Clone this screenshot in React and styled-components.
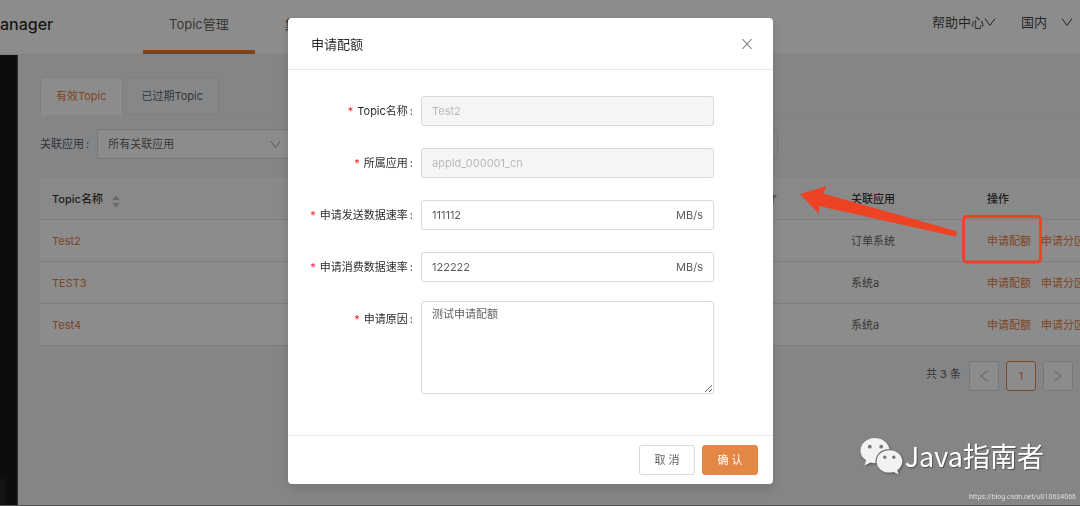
import React from 'react';
import styled, {createGlobalStyle} from 'styled-components';

const GlobalStyle = createGlobalStyle`
  * {
    box-sizing: border-box;
  }

  body {
    margin: 0;
    overflow: hidden;
    background: #f0f2f5;
    color: rgba(0, 0, 0, 0.65);
    font-family: Inter, "Noto Sans CJK SC", sans-serif;
    font-size: 11px;
    line-height: 18px;
  }

  button, input, select, textarea {
    margin: 0;
    color: inherit;
    font: inherit;
  }
`;

const menus = ['Topic管理', '集群管理', '监控大盘', '用户管理', '运维管控'];

const topics = [
    {name: 'Test2', app: '订单系统'},
    {name: 'TEST3', app: '系统a'},
    {name: 'Test4', app: '系统a'},
];

const fields = [
    {id: 'topicName', label: 'Topic名称', value: 'Test2', disabled: true},
    {id: 'app', label: '所属应用', value: 'appId_000001_cn', disabled: true},
    {id: 'produce', label: '申请发送数据速率', value: '111112', unit: 'MB/s'},
    {id: 'consume', label: '申请消费数据速率', value: '122222', unit: 'MB/s'},
];

const ArrowSvg = ({rotate = 0, size = 12}) => (
    <svg width={size} height={size} viewBox="0 0 12 12" fill="none" stroke="currentColor">
        <path d="M1 2.5L6 9.5L11 2.5" transform={`rotate(${rotate} 6 6)`}/>
    </svg>
);

const CloseSvg = () => (
    <svg width="10" height="10" viewBox="0 0 10 10" fill="none" stroke="currentColor" strokeWidth="1.1">
        <path d="M.5 .2L9.5 9.8M9.5 .2L.5 9.8"/>
    </svg>
);

const SortSvg = () => (
    <svg width="8" height="13" viewBox="0 0 8 13" fill="#bfbfbf">
        <path d="M4 .5L7.6 5H.4zM4 12.5L.4 8h7.2z"/>
    </svg>
);

const FilterSvg = () => (
    <svg width="14" height="9" viewBox="0 0 14 9" fill="#999">
        <path d="M5 1h9l-3.3 4v3.4H8.300V5z"/>
    </svg>
);

const WechatSvg = () => (
    <svg width="43" height="38" viewBox="0 0 43 38">
        <path
            fill="#f2f2f2"
            d="M15 1C6.800 1 .5 6.600.5 13.600c0 4 2.100 7.400 5.500 9.700L4.500 28.500l6-3c1.500.4 3.200.7 5 .7C15.200 18 21 11.800 29.600 12.400 28.300 5.700 22.200 1 15 1z"
        />
        <path
            fill="#f2f2f2"
            d="M29.300 13.200c-7.300 0-12.700 4.800-12.700 11S22 35.600 29.300 35.600c1.500 0 3-.3 4.300-.7l5 2.600-1.300-4.300c3.100-2.100 5-5.300 5-9C42.300 18 36.600 13.200 29.300 13.200z"
        />
        <g fill="#77787a">
            <circle cx="9.800" cy="9.700" r="1.900"/>
            <circle cx="21.200" cy="9.700" r="1.900"/>
            <circle cx="24.800" cy="20.200" r="1.700"/>
            <circle cx="33.800" cy="20.200" r="1.700"/>
        </g>
    </svg>
);

const App = () => {
    return (
        <>
            <GlobalStyle/>
            <Header>
                <Brand>anager</Brand>
                <Nav>
                    {menus.map((item, index) =>
                        <NavLink key={item} href="#" $active={index === 0}>{item}</NavLink>
                    )}
                </Nav>
                <HeaderButton>帮助中心<ArrowSvg/></HeaderButton>
                <HeaderButton $gap="14px">国内<ArrowSvg/></HeaderButton>
            </Header>
            <Main>
                <Sidebar>
                    <Collapse/>
                </Sidebar>
                <Content>
                    <Tabs>
                        <Tab $active>有效Topic</Tab>
                        <Tab>已过期Topic</Tab>
                    </Tabs>
                    <Filters>
                        <label htmlFor="linkedApp">关联应用<Colon>:</Colon></label>
                        <SelectBox>
                            <select id="linkedApp">
                                <option>所有关联应用</option>
                            </select>
                            <ArrowSvg size={11}/>
                        </SelectBox>
                        <Search aria-label="Topic名称"/>
                    </Filters>
                    <Table>
                        <colgroup>
                            <col/>
                            <col width="88"/>
                            <col width="136"/>
                            <col width="105"/>
                        </colgroup>
                        <thead>
                            <tr>
                                <th><Sorter>Topic名称<SortSvg/></Sorter></th>
                                <th><FilterSvg/></th>
                                <th>关联应用</th>
                                <th>操作</th>
                            </tr>
                        </thead>
                        <tbody>
                            {topics.map(({name, app}) =>
                                <tr key={name}>
                                    <td><a href="#">{name}</a></td>
                                    <td/>
                                    <td>{app}</td>
                                    <td>
                                        <Actions>
                                            <a href="#">申请配额</a>
                                            <a href="#">申请分区</a>
                                        </Actions>
                                    </td>
                                </tr>
                            )}
                        </tbody>
                    </Table>
                    <Pagination>
                        <span>共 3 条</span>
                        <PageButton aria-label="上一页"><ArrowSvg rotate={90}/></PageButton>
                        <PageButton $active>1</PageButton>
                        <PageButton aria-label="下一页"><ArrowSvg rotate={-90}/></PageButton>
                    </Pagination>
                </Content>
            </Main>

            <Mask>
                <Modal role="dialog" aria-labelledby="quotaTitle">
                    <ModalHeader>
                        <h2 id="quotaTitle">申请配额</h2>
                        <Close aria-label="关闭"><CloseSvg/></Close>
                    </ModalHeader>
                    <Form>
                        {fields.map(({id, label, value, disabled, unit}) =>
                            <Row key={id}>
                                <Label htmlFor={id}>{label}<Colon>:</Colon></Label>
                                <InputBox $disabled={disabled}>
                                    <input id={id} defaultValue={value} disabled={disabled}/>
                                    {unit}
                                </InputBox>
                            </Row>
                        )}
                        <Row $top>
                            <Label htmlFor="reason">申请原因<Colon>:</Colon></Label>
                            <TextArea id="reason" defaultValue="测试申请配额"/>
                        </Row>
                    </Form>
                    <ModalFooter>
                        <Button>取 消</Button>
                        <Button $primary>确 认</Button>
                    </ModalFooter>
                </Modal>
            </Mask>

            <Marks viewBox="0 0 280 110">
                <path
                    fill="#ee4225"
                    d="M0 24L27 16L23 23.500L156 61Q158 64 155 66.500L19 36V44z"
                />
                <rect x="163.500" y="46.500" width="77" height="45.500" rx="3" fill="none" stroke="#ee4225" strokeWidth="2.800"/>
            </Marks>
            <Watermark>
                <WechatSvg/>
                Java指南者
            </Watermark>
            <Source>https://blog.csdn.net/u010634066</Source>
        </>
    )
}

const Header = styled.header`
  display: flex;
  align-items: stretch;
  height: 55px;
  padding-right: 7px;
  background: #fff;
  border-bottom: 1px solid #e8ebee;
`;

const Brand = styled.div`
  width: 143px;
  padding-top: 15px;
  color: rgba(0, 0, 0, 0.85);
  font-size: 16px;
  font-weight: 500;
`;

const Nav = styled.nav`
  flex: 1;
  display: flex;
  gap: 4px;
`;

const NavLink = styled.a`
  padding: 15px 26px 0;
  color: rgba(0, 0, 0, 0.65);
  font-size: 13px;
  text-decoration: none;
  border-bottom: 4px solid ${({$active}) => $active ? '#ed7b2f' : 'transparent'};
`;

const HeaderButton = styled.button`
  display: flex;
  align-items: center;
  gap: ${({$gap}) => $gap || '0'};
  margin-left: 25px;
  padding: 0 0 10px;
  font-size: 13px;
  color: rgba(0, 0, 0, 0.75);
  background: none;
  border: 0;
`;

const Main = styled.div`
  display: flex;
  min-height: calc(100vh - 55px);
  border-bottom: 1px solid #999;
`;

const Sidebar = styled.aside`
  display: flex;
  align-items: flex-end;
  width: 18px;
  background: #181818;
  border-right: 1px solid #555;
`;

const Collapse = styled.div`
  width: 5px;
  height: 26px;
  background: #262626;
`;

const Content = styled.main`
  flex: 1;
  min-width: 0;
  padding: 22px 0 0 22px;
`;

const Tabs = styled.div`
  display: flex;
  gap: 3px;
  border-bottom: 1px solid #e6e9ec;
`;

const Tab = styled.button`
  height: 38px;
  margin-bottom: -1px;
  padding: 0 15px;
  color: ${({$active}) => $active ? '#e8803c' : 'inherit'};
  background: ${({$active}) => $active ? '#fff' : '#f5f6f8'};
  border: 1px solid #e6e9ec;
  border-bottom-color: ${({$active}) => $active ? '#fff' : '#e6e9ec'};
  border-radius: 4px 4px 0 0;
`;

const Colon = styled.span`
  margin: 0 8px 0 2px;
`;

const Filters = styled.div`
  display: flex;
  align-items: center;
  padding: 14px 302px 19px 0;
`;

const SelectBox = styled.div`
  display: flex;
  align-items: center;
  width: 195px;
  height: 30px;
  padding: 0 10px;
  background: #fff;
  border: 1px solid #d9d9d9;
  border-radius: 3px;

  select {
    flex: 1;
    padding: 0;
    appearance: none;
    background: none;
    border: 0;
  }

  svg {
    color: #999;
  }
`;

const Search = styled.input`
  width: 180px;
  height: 30px;
  margin-left: auto;
  background: #f0f2f5;
  border: 1px solid #d9d9d9;
  border-radius: 3px;
`;

const Table = styled.table`
  width: 100%;
  table-layout: fixed;
  border-collapse: separate;
  border-spacing: 0;
  background: #fff;
  border-radius: 3px 0 0 0;

  th, td {
    height: 42px;
    padding: 0 0 0 12px;
    text-align: left;
    border-bottom: 1px solid #e2e5e8;
  }

  th {
    color: rgba(0, 0, 0, 0.8);
    font-weight: 500;
    background: #fafafa;
  }

  a {
    color: #e8803c;
    text-decoration: none;
  }
`;

const Sorter = styled.div`
  display: flex;
  align-items: center;
  gap: 9px;

  svg {
    margin-top: 5px;
  }
`;

const Actions = styled.div`
  display: flex;
  gap: 10px;
  overflow: hidden;
  white-space: nowrap;
`;

const Pagination = styled.div`
  display: flex;
  justify-content: flex-end;
  gap: 7px;
  padding: 15px 7px 0 0;

  span {
    padding: 4px 1px 0 0;
  }
`;

const PageButton = styled.button`
  display: flex;
  align-items: center;
  justify-content: center;
  width: 30px;
  height: 30px;
  padding: 0;
  color: ${({$active}) => $active ? '#e8803c' : '#b0b0b0'};
  background: #fff;
  border: 1px solid ${({$active}) => $active ? '#e8803c' : '#d9d9d9'};
  border-radius: 3px;
`;

const Mask = styled.div`
  position: fixed;
  inset: 0;
  display: flex;
  align-items: flex-start;
  justify-content: center;
  padding: 18px 19px 0 0;
  background: rgba(0, 0, 0, 0.45);
`;

const Modal = styled.section`
  width: 485px;
  background: #fff;
  border-radius: 4px;
  box-shadow: 0 4px 12px rgba(0, 0, 0, 0.15);
`;

const ModalHeader = styled.header`
  display: flex;
  align-items: center;
  justify-content: space-between;
  height: 52px;
  padding: 0 21px 0 23px;
  border-bottom: 1px solid #e8e8e8;

  h2 {
    margin: 0;
    color: rgba(0, 0, 0, 0.85);
    font-size: 13px;
    font-weight: 400;
  }
`;

const Close = styled.button`
  display: flex;
  padding: 0;
  color: rgba(0, 0, 0, 0.5);
  background: none;
  border: 0;
`;

const Form = styled.form`
  display: grid;
  gap: 16px;
  padding: 23px 59px 41px 0;
`;

const Row = styled.div`
  display: grid;
  grid-template-columns: 133px 1fr;
  align-items: ${({$top}) => $top ? 'start' : 'center'};
`;

const Label = styled.label`
  color: rgba(0, 0, 0, 0.85);
  line-height: 36px;
  text-align: right;

  &::before {
    content: "*";
    margin-right: 4px;
    color: #f5222d;
  }
`;

const InputBox = styled.div`
  display: flex;
  align-items: center;
  height: 30px;
  padding: 0 10px;
  color: ${({$disabled}) => $disabled ? 'rgba(0, 0, 0, 0.25)' : 'inherit'};
  background: ${({$disabled}) => $disabled ? '#f5f5f5' : '#fff'};
  border: 1px solid #d9d9d9;
  border-radius: 3px;

  input {
    flex: 1;
    min-width: 0;
    padding: 0;
    background: none;
    border: 0;
  }
`;

const TextArea = styled.textarea`
  display: block;
  width: 100%;
  height: 93px;
  padding: 3px 10px;
  border: 1px solid #d9d9d9;
  border-radius: 3px;
`;

const ModalFooter = styled.footer`
  display: flex;
  justify-content: flex-end;
  gap: 7px;
  padding: 9px 15px;
  border-top: 1px solid #e8e8e8;
`;

const Button = styled.button`
  width: 56px;
  height: 30px;
  padding: 0;
  color: ${({$primary}) => $primary ? '#fff' : 'inherit'};
  background: ${({$primary}) => $primary ? '#e48645' : '#fff'};
  border: 1px solid ${({$primary}) => $primary ? '#e48645' : '#d9d9d9'};
  border-radius: 3px;
`;

const Marks = styled.svg`
  position: absolute;
  top: 170px;
  right: 0;
  width: 280px;
  height: 110px;
  pointer-events: none;
`;

const Watermark = styled.div`
  position: absolute;
  right: 36px;
  bottom: 31px;
  display: flex;
  align-items: center;
  gap: 2px;
  color: #fff;
  font-family: "Noto Sans CJK SC", sans-serif;
  font-size: 27px;
  line-height: 38px;
  text-shadow: 1px 1px 1px rgba(0, 0, 0, 0.4);

  svg {
    filter: drop-shadow(1px 1px 1px rgba(0, 0, 0, 0.4));
  }
`;

const Source = styled.div`
  position: absolute;
  right: 4px;
  bottom: 0;
  color: rgba(255, 255, 255, 0.7);
  font-family: Roboto, sans-serif;
  font-size: 7px;
`;

export default App;
